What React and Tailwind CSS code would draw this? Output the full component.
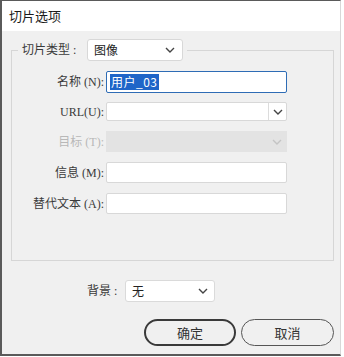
import React from "react";

const font = { fontFamily: '"Noto Sans CJK SC", "Noto Sans", sans-serif' };
const labelFont = { fontFamily: '"Liberation Serif", "Noto Sans CJK SC", serif' };

function Chevron({ className = "" }) {
  return (
    <svg width="10" height="6" viewBox="0 0 10 6" className={className}>
      <path d="M1 1 L5 5 L9 1" fill="none" stroke="currentColor" strokeWidth="1.4" />
    </svg>
  );
}

function Label({ children, disabled }) {
  return (
    <div
      className={`w-[93px] shrink-0 text-right pr-[1px] text-[12px] leading-none ${disabled ? "text-[#b8b8b8]" : "text-[#3a3a3a]"}`}
      style={labelFont}
    >
      {children}
    </div>
  );
}

export default function App() {
  return (
    <div className="w-[344px] h-[357px] bg-white" style={font}>
      <div className="w-[341px] h-[356px] border-l-2 border-t border-b-2 border-[#5a5a5a] border-r border-r-[#d8d8d8] bg-[#f0f0f0] flex flex-col">
        <div className="h-[30px] bg-white flex items-center pl-[7px] text-[13px] text-[#1a1a1a] shrink-0">
          切片选项
        </div>
        <fieldset className="ml-[9px] w-[323px] h-[222px] mt-[8px] border border-[#d6d6d6] shrink-0">
          <legend className="ml-[6px] px-[4px] flex items-center h-[22px]">
            <span className="text-[12px] text-[#3a3a3a] w-[65px]" style={labelFont}>切片类型 :</span>
            <div className="w-[96px] h-[22px] bg-white border border-[#d8d8d8] rounded-[3px] flex items-center justify-between pl-[6px] pr-[7px] text-[12px] text-[#222]">
              <span>图像</span>
              <Chevron className="text-[#444]" />
            </div>
          </legend>
          <div className="flex flex-col pt-[10px]">
            <div className="flex items-center h-[22px]">
              <Label>名称 (N):</Label>
              <div className="ml-[1px] w-[181px] h-[22px] bg-white border border-[#2e6cb5] rounded-[2px] flex items-center pl-[3px]">
                <span className="bg-[#1f65c8] text-white text-[12px] leading-[16px] px-[1px] tracking-[0.5px]">用户_03</span>
              </div>
            </div>
            <div className="flex items-center h-[19px] mt-[9px]">
              <Label>URL(U):</Label>
              <div className="ml-[1px] w-[181px] h-[19px] bg-white border border-[#d8d8d8] rounded-[2px] flex">
                <div className="flex-1" />
                <div className="w-[18px] border-l border-[#dcdcdc] flex items-center justify-center text-[#444]">
                  <Chevron />
                </div>
              </div>
            </div>
            <div className="flex items-center h-[21px] mt-[10px]">
              <Label disabled>目标 (T):</Label>
              <div className="ml-[1px] w-[181px] h-[21px] bg-[#e3e3e3] flex items-center justify-end pr-[5px] text-[#c4c4c4]">
                <Chevron />
              </div>
            </div>
            <div className="flex items-center h-[21px] mt-[10px]">
              <Label>信息 (M):</Label>
              <div className="ml-[1px] w-[181px] h-[21px] bg-white border border-[#d8d8d8] rounded-[2px]" />
            </div>
            <div className="flex items-center h-[21px] mt-[10px]">
              <Label>替代文本 (A):</Label>
              <div className="ml-[1px] w-[181px] h-[21px] bg-white border border-[#d8d8d8] rounded-[2px]" />
            </div>
          </div>
        </fieldset>
        <div className="flex items-center mt-[19px] h-[22px] pl-[85px]">
          <span className="text-[12px] text-[#3a3a3a] w-[38px]" style={labelFont}>背景 :</span>
          <div className="w-[90px] h-[22px] bg-white border border-[#dadada] rounded-[3px] flex items-center justify-between pl-[6px] pr-[6px] text-[12px] text-[#222]">
            <span>无</span>
            <Chevron className="text-[#444]" />
          </div>
        </div>
        <div className="flex mt-[17px] pl-[142px] gap-[5px]">
          <button className="w-[92px] h-[27px] rounded-full border-2 border-[#3a3a3a] bg-[#f0f0f0] text-[13px] text-[#333]">确定</button>
          <button className="w-[93px] h-[27px] rounded-full border-[1.5px] border-[#555] bg-[#f0f0f0] text-[13px] text-[#333]">取消</button>
        </div>
      </div>
    </div>
  );
}
